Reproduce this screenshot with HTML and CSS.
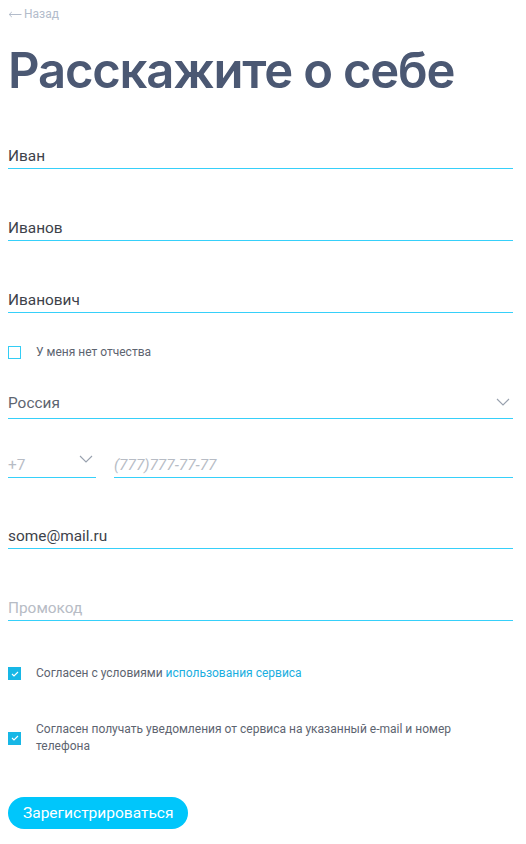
FILE: index.html
```html
<!DOCTYPE html>
<html lang="ru">
<head>
<meta charset="utf-8">
<link rel="stylesheet" href="styles.css">
</head>
<body>
<div class="page">
  <a class="back" href="#"><svg class="back-arrow" width="14" height="7" viewBox="0 0 14 7"><path d="M13.5 3.5H1.2M3.8 1L1.2 3.5 3.8 6" fill="none" stroke="#b3bccb" stroke-width="1"/></svg>Назад</a>
  <h1 class="title">Расскажите о себе</h1>
  <form class="form">
    <div class="field"><span class="value">Иван</span></div>
    <div class="field"><span class="value">Иванов</span></div>
    <div class="field"><span class="value">Иванович</span></div>
    <label class="check check-first"><span class="box"></span><span class="check-text">У меня нет отчества</span></label>
    <div class="field select"><span class="value muted">Россия</span>
      <svg class="chev" width="14" height="8" viewBox="0 0 14 8"><path d="M1 1l6 6 6-6" fill="none" stroke="#98a1ae" stroke-width="1.1"/></svg>
    </div>
    <div class="phone-row">
      <div class="field code"><span class="value placeholder">+7</span>
        <svg class="chev chev-code" width="14" height="8" viewBox="0 0 14 8"><path d="M1 1l6 6 6-6" fill="none" stroke="#98a1ae" stroke-width="1.1"/></svg>
      </div>
      <div class="field number"><span class="value placeholder italic">(777)777-77-77</span></div>
    </div>
    <div class="field"><span class="value">some@mail.ru</span></div>
    <div class="field"><span class="value placeholder">Промокод</span></div>
    <label class="check check-agree"><span class="box on"><svg width="8" height="6" viewBox="0 0 8 6"><path d="M1 3l2 2 4-4" fill="none" stroke="#fff" stroke-width="1.1"/></svg></span><span class="check-text">Согласен с условиями <a href="#" class="link">использования сервиса</a></span></label>
    <label class="check check-notify"><span class="box on"><svg width="8" height="6" viewBox="0 0 8 6"><path d="M1 3l2 2 4-4" fill="none" stroke="#fff" stroke-width="1.1"/></svg></span><span class="check-text">Согласен получать уведомления от сервиса на указанный e-mail и номер телефона</span></label>
    <button type="button" class="submit">Зарегистрироваться</button>
  </form>
</div>
</body>
</html>
```

FILE: styles.css
```css
* { box-sizing: border-box; }
html, body { margin: 0; padding: 0; background: #fff; }
body { font-family: Roboto, "Liberation Sans", sans-serif; }
.page { padding: 0 13px 0 8px; }
.back {
  display: flex;
  align-items: center;
  gap: 2px;
  margin-top: 6px;
  font-size: 12px;
  line-height: 16px;
  color: #b3bccb;
  text-decoration: none;
}
.title {
  margin: 19px 0 0 0;
  font-family: Inter, sans-serif;
  font-weight: 600;
  font-size: 49px;
  line-height: 60px;
  letter-spacing: -1.2px;
  color: #4b5873;
}
.form { display: flex; flex-direction: column; margin-top: 44px; }
.field {
  position: relative;
  display: flex;
  align-items: flex-end;
  height: 24px;
  border-bottom: 1px solid #36d0fa;
  margin-bottom: 48px;
}
.value {
  font-size: 15.4px;
  line-height: 20px;
  color: #3d424a;
  padding-bottom: 2px;
}
.value.muted { color: #5e6570; }
.value.placeholder { color: #b7bcc5; }
.value.italic { font-style: italic; }
.select { justify-content: space-between; margin-bottom: 35px; }
.select .value { padding-bottom: 5px; }
.chev { position: absolute; right: 3px; bottom: 12px; }
.phone-row { display: flex; gap: 18px; }
.phone-row .field { margin-bottom: 47px; }
.code { width: 88px; }
.chev-code { right: 3px; bottom: 14px; }
.number { flex: 1; }
.check {
  display: flex;
  align-items: center;
  gap: 15px;
  font-size: 12px;
  line-height: 17px;
  color: #5d6470;
}
.check-first { margin: -17px 0 34px; }
.check-agree { margin: -4px 0 39px; }
.check-notify { margin: 0 0 42px; }
.box {
  flex: none;
  width: 13px;
  height: 13px;
  border: 1px solid #33cdf5;
  display: flex;
  align-items: center;
  justify-content: center;
}
.box.on { background: #17b7e6; border-color: #17b7e6; }
.check-text { padding-right: 40px; }
.link { color: #1aaee0; text-decoration: none; }
.submit {
  align-self: flex-start;
  height: 32px;
  padding: 0 15px;
  border: none;
  border-radius: 16px;
  background: #00c6fb;
  color: #fff;
  font-family: Roboto, sans-serif;
  font-size: 15.5px;
}
```
